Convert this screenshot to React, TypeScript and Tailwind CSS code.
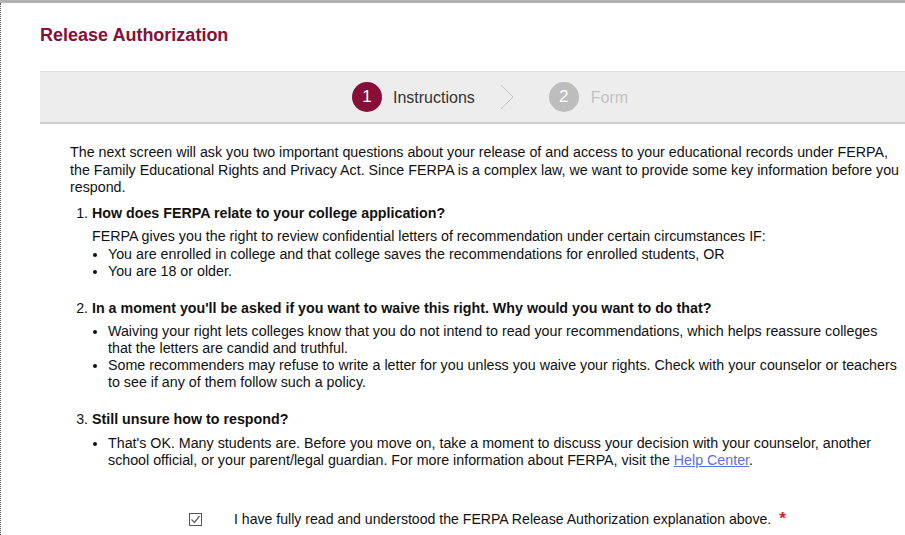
import React from 'react';

const font = { fontFamily: '"Liberation Sans", Arial, sans-serif' };

const StepCircle = ({ n, active }: { n: number; active?: boolean }) => (
  <span
    className={`flex h-[30px] w-[30px] items-center justify-center rounded-full text-[17px] text-white ${
      active ? 'bg-[#870f37]' : 'bg-[#bdbdbd]'
    }`}
  >
    {n}
  </span>
);

const App = () => {
  return (
    <div className="h-[535px] w-[905px] overflow-hidden bg-white text-[#111]" style={font}>
      <div className="h-[3px] bg-[#b1b1b1]" />
      <div className="flex h-[532px]">
        <div className="w-[2px] border-l border-dotted border-[#555]" />
        <div className="flex-1 pl-[38px]">
          <h1 className="pt-[22px] text-[18px] leading-[21px] font-bold text-[#870f37]">Release Authorization</h1>

          <div className="mt-[25px] -mr-[40px] flex h-[53px] items-center border-t border-b-2 border-t-[#e2e2e2] border-b-[#cfcfcf] bg-[#ededed] pl-[312px]">
            <StepCircle n={1} active />
            <span className="ml-[11px] mt-[1px] text-[16px] text-[#333]">Instructions</span>
            <svg className="ml-[25px]" width="14" height="26" viewBox="0 0 14 26" fill="none">
              <path d="M1 1 L13 13 L1 25" stroke="#c4c4c4" strokeWidth="1" />
            </svg>
            <span className="ml-[35px]">
              <StepCircle n={2} />
            </span>
            <span className="ml-[12px] mt-[1px] text-[16px] text-[#c2c2c2]">Form</span>
          </div>

          <div className="-mr-[10px] pt-[20px] pl-[30px] text-[14.25px] leading-[17.5px]">
            <p>
              The next screen will ask you two important questions about your release of and access to your educational
              records under FERPA,
              <br />
              the Family Educational Rights and Privacy Act. Since FERPA is a complex law, we want to provide some key
              information before you
              <br />
              respond.
            </p>

            <ol className="mt-[8px] list-decimal pl-[22px]">
              <li>
                <p className="font-bold">How does FERPA relate to your college application?</p>
                <p className="mt-[6px]">
                  FERPA gives you the right to review confidential letters of recommendation under certain circumstances
                  IF:
                </p>
                <ul className="list-disc pl-[16px] leading-[17px]">
                  <li>You are enrolled in college and that college saves the recommendations for enrolled students, OR</li>
                  <li>You are 18 or older.</li>
                </ul>
              </li>
              <li className="mt-[20px]">
                <p className="font-bold">In a moment you'll be asked if you want to waive this right. Why would you want to do that?</p>
                <ul className="mt-[6px] list-disc pl-[16px] leading-[17px]">
                  <li>
                    Waiving your right lets colleges know that you do not intend to read your recommendations, which helps
                    reassure colleges
                    <br />
                    that the letters are candid and truthful.
                  </li>
                  <li>
                    Some recommenders may refuse to write a letter for you unless you waive your rights. Check with your
                    counselor or teachers
                    <br />
                    to see if any of them follow such a policy.
                  </li>
                </ul>
              </li>
              <li className="mt-[20px]">
                <p className="font-bold">Still unsure how to respond?</p>
                <ul className="mt-[6px] list-disc pl-[16px] leading-[17px]">
                  <li>
                    That's OK. Many students are. Before you move on, take a moment to discuss your decision with your
                    counselor, another
                    <br />
                    school official, or your parent/legal guardian. For more information about FERPA, visit the{' '}
                    <a href="#" className="text-[#5f6fe6] underline">Help Center</a>.
                  </li>
                </ul>
              </li>
            </ol>

            <div className="mt-[42px] flex items-center pl-[119px] text-[14.1px]">
              <span className="flex h-[13px] w-[13px] items-center justify-center border border-[#555] bg-white">
                <svg width="11" height="11" viewBox="0 0 11 11" fill="none">
                  <path d="M1.5 5.5 L4.5 8.5 L9.5 2" stroke="#666" strokeWidth="1.3" />
                </svg>
              </span>
              <span className="ml-[32px]">I have fully read and understood the FERPA Release Authorization explanation above.</span>
              <span className="ml-[8px] -mt-[2px] text-[17px] font-bold text-[#e8141b]">*</span>
            </div>
          </div>
        </div>
      </div>
    </div>
  );
};

export default App;
